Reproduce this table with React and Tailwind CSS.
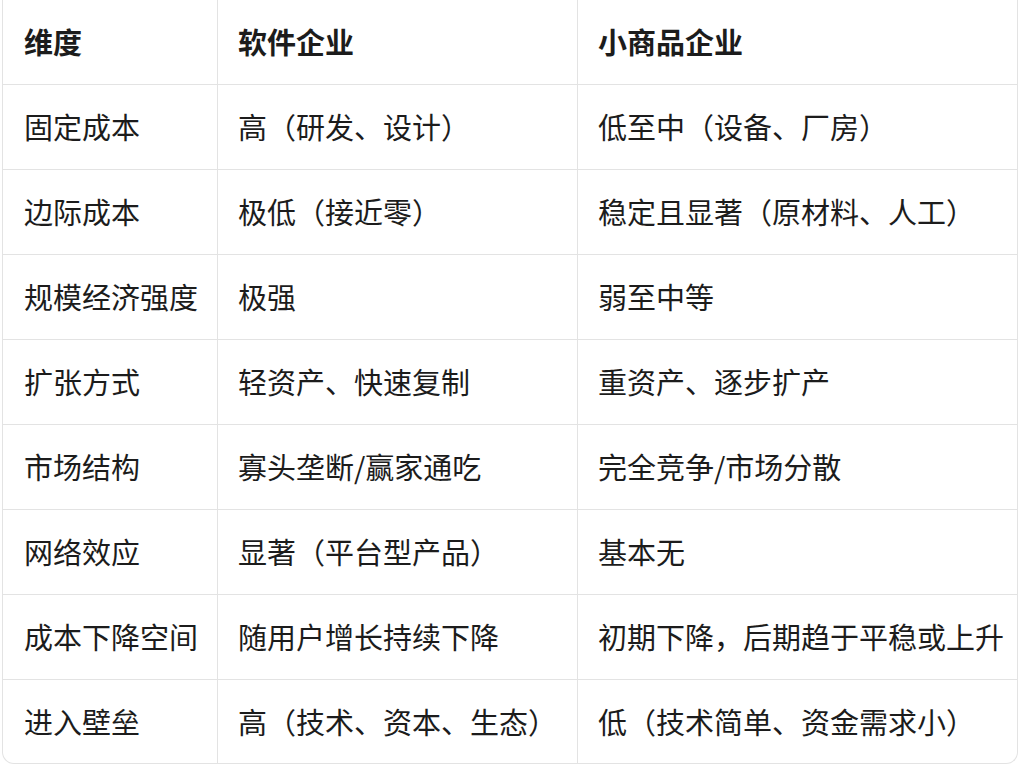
import React from "react";

const rows = [
  ["固定成本", "高（研发、设计）", "低至中（设备、厂房）"],
  ["边际成本", "极低（接近零）", "稳定且显著（原材料、人工）"],
  ["规模经济强度", "极强", "弱至中等"],
  ["扩张方式", "轻资产、快速复制", "重资产、逐步扩产"],
  ["市场结构", "寡头垄断/赢家通吃", "完全竞争/市场分散"],
  ["网络效应", "显著（平台型产品）", "基本无"],
  ["成本下降空间", "随用户增长持续下降", "初期下降，后期趋于平稳或上升"],
  ["进入壁垒", "高（技术、资本、生态）", "低（技术简单、资金需求小）"],
];

export default function App() {
  return (
    <div className="h-[764px] w-[1018px] overflow-hidden bg-white font-['Noto_Sans_CJK_SC','Noto_Sans',sans-serif] text-[29px] text-[#1c1c1c]">
      <div className="ml-[2px] w-[1016px] rounded-b-[12px] border-x border-b border-[#e3e3e3]">
        <div className="grid h-[85px] grid-cols-[214px_360px_440px] border-b border-[#e3e3e3] font-bold">
          <div className="flex items-center pl-[21px]">维度</div>
          <div className="flex items-center border-l border-[#e3e3e3] pl-[20px]">软件企业</div>
          <div className="flex items-center border-l border-[#e3e3e3] pl-[20px]">小商品企业</div>
        </div>
        {rows.map((r, i) => (
          <div
            key={i}
            className={`grid grid-cols-[214px_360px_440px] ${
              i === rows.length - 1 ? "h-[83px]" : "h-[85px] border-b border-[#e3e3e3]"
            }`}
          >
            <div className="flex items-center whitespace-nowrap pl-[21px]">{r[0]}</div>
            <div className="flex items-center whitespace-nowrap border-l border-[#e3e3e3] pl-[20px]">{r[1]}</div>
            <div className="flex items-center whitespace-nowrap border-l border-[#e3e3e3] pl-[20px]">{r[2]}</div>
          </div>
        ))}
      </div>
    </div>
  );
}
